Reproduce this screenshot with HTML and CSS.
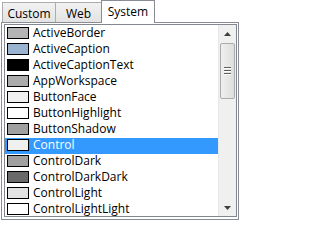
FILE: index.html
```html
<!DOCTYPE html>
<html>
<head>
<meta charset="utf-8">
<link rel="stylesheet" href="styles.css">
</head>
<body>
<div class="editor">
  <div class="tabs">
    <div class="tab tab-custom">Custom</div>
    <div class="tab tab-web">Web</div>
    <div class="tab tab-active">System</div>
  </div>
  <div class="panel">
    <div class="listbox">
      <div class="items">
        <div class="item"><span class="sw" style="background:#b4b4b4"></span>ActiveBorder</div>
        <div class="item"><span class="sw" style="background:#99b4d1"></span>ActiveCaption</div>
        <div class="item"><span class="sw" style="background:#000000"></span>ActiveCaptionText</div>
        <div class="item"><span class="sw" style="background:#ababab"></span>AppWorkspace</div>
        <div class="item"><span class="sw" style="background:#f0f0f0"></span>ButtonFace</div>
        <div class="item"><span class="sw" style="background:#ffffff"></span>ButtonHighlight</div>
        <div class="item"><span class="sw" style="background:#a0a0a0"></span>ButtonShadow</div>
        <div class="item selected"><span class="sw" style="background:#f0f0f0"></span>Control</div>
        <div class="item"><span class="sw" style="background:#a0a0a0"></span>ControlDark</div>
        <div class="item"><span class="sw" style="background:#696969"></span>ControlDarkDark</div>
        <div class="item"><span class="sw" style="background:#e3e3e3"></span>ControlLight</div>
        <div class="item"><span class="sw" style="background:#ffffff"></span>ControlLightLight</div>
      </div>
      <div class="scrollbar">
        <div class="arrow">
          <svg width="7" height="4" viewBox="0 0 7 4"><path d="M0 4 L3.5 0 L7 4 Z" fill="#404040"/></svg>
        </div>
        <div class="track">
          <div class="thumb">
            <div class="grip"></div>
            <div class="grip"></div>
            <div class="grip"></div>
          </div>
        </div>
        <div class="arrow">
          <svg width="7" height="4" viewBox="0 0 7 4"><path d="M0 0 L7 0 L3.5 4 Z" fill="#404040"/></svg>
        </div>
      </div>
    </div>
  </div>
</div>
</body>
</html>
```
FILE: styles.css
```css
html, body {
  margin: 0;
  padding: 0;
  background: #ffffff;
}
.editor {
  width: 241px;
  height: 222px;
  font-family: "Open Sans", "Noto Sans", sans-serif;
  font-size: 12px;
  color: #000;
  box-sizing: border-box;
}
.tabs {
  display: flex;
  align-items: flex-end;
  height: 23px;
  padding-left: 2px;
  position: relative;
  z-index: 1;
}
.tab {
  box-sizing: border-box;
  height: 20px;
  border: 1px solid #acacac;
  border-bottom: none;
  background: linear-gradient(#f2f2f2, #e3e3e3);
  line-height: 18px;
  padding-top: 2px;
  text-align: center;
  margin-bottom: 1px;
}
.tab-custom {
  width: 54px;
}
.tab-web {
  width: 47px;
  margin-left: -1px;
}
.tab-active {
  width: 54px;
  height: 23px;
  margin-left: -1px;
  margin-bottom: 0;
  background: #ffffff;
  border-color: #898c95;
  line-height: 19px;
  padding-top: 1px;
}
.panel {
  box-sizing: border-box;
  width: 238px;
  height: 198px;
  margin-left: 1px;
  margin-top: -1px;
  border: 1px solid #898c95;
  padding: 1px 1px 2px 2px;
  background: #ffffff;
}
.listbox {
  box-sizing: border-box;
  height: 100%;
  border: 1px solid #828790;
  display: flex;
  overflow: hidden;
  background: #fff;
}
.items {
  flex: 1;
  padding-top: 1px;
  overflow: hidden;
}
.item {
  box-sizing: border-box;
  height: 16px;
  padding-bottom: 2px;
  display: flex;
  align-items: center;
  line-height: 14px;
  white-space: nowrap;
}
.item.selected {
  background: #3399ff;
  color: #ffffff;
}
.sw {
  box-sizing: border-box;
  width: 22px;
  height: 12px;
  border: 1px solid #000;
  margin-left: 2px;
  margin-right: 4px;
  flex: none;
}
.scrollbar {
  width: 17px;
  flex: none;
  background: #f0f0f0;
  border-left: 1px solid #e8e8e8;
  display: flex;
  flex-direction: column;
}
.arrow {
  height: 17px;
  display: flex;
  align-items: center;
  justify-content: center;
}
.track {
  flex: 1;
  padding: 1px 1px 0;
}
.thumb {
  box-sizing: border-box;
  height: 56px;
  border: 1px solid #acacac;
  border-radius: 2px;
  background: linear-gradient(90deg, #efefef, #dedede);
  display: flex;
  flex-direction: column;
  justify-content: center;
  align-items: center;
  gap: 1px;
}
.grip {
  width: 7px;
  height: 1px;
  background: #5c5c5c;
  border-bottom: 1px solid #fff;
}
```
